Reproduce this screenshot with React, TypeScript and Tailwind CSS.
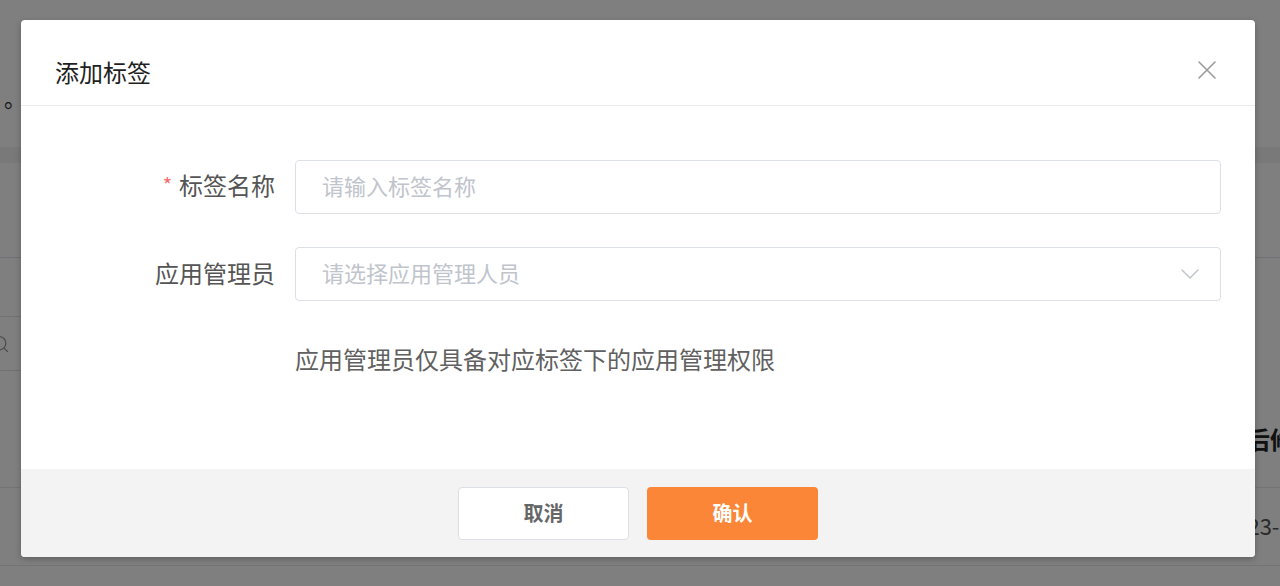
import { Search } from 'lucide-react';

const font = { fontFamily: '"Noto Sans CJK SC", "Noto Sans", sans-serif' };

function BackgroundPage() {
  return (
    <div className="w-full h-[586px] bg-white overflow-hidden">
      <div className="h-[147px] pt-[80px] pl-[4px] text-[22px] leading-[34px] text-[#333]">。</div>
      <div className="h-[16px] bg-[#f2f2f2]" />
      <div className="h-[95px] border-b border-[#dfe5ec]" />
      <div className="h-[58px]" />
      <div className="h-[55px] w-[260px] -ml-[30px] border border-[#e4e4e4] rounded flex items-center pl-[19px]">
        <Search size={20} strokeWidth={1.5} className="text-[#999]" />
      </div>
      <div className="h-[117px] border-b border-[#e8e8e8] flex items-end pb-[31px]">
        <span className="pl-[1222px] whitespace-nowrap text-[24px] leading-[34px] font-bold text-[#222]">最后修改时间</span>
      </div>
      <div className="h-[78px] border-b border-[#e8e8e8] flex items-center pb-[4px]">
        <span className="pl-[1223px] whitespace-nowrap text-[22px] leading-[34px] text-[#555]">2023-05-12 10:24</span>
      </div>
    </div>
  );
}

export default function App() {
  return (
    <div className="relative w-full h-[586px] overflow-hidden" style={font}>
      <BackgroundPage />

      {/* mask */}
      <div className="absolute inset-0 bg-black/50" />

      {/* dialog */}
      <div className="absolute left-[21px] top-[20px] w-[1234px] bg-white rounded-[4px] overflow-hidden shadow-[0_2px_6px_rgba(0,0,0,0.25)]">
        <div className="h-[86px] border-b border-[#ebebeb] pl-[34px] pr-[38px] pt-[35px] flex items-start justify-between">
          <h3 className="text-[24px] leading-[34px] text-[#1f1f1f]">添加标签</h3>
          <button className="mt-[5px] text-[#9a9a9a]">
            <svg width="20" height="20" viewBox="0 0 20 20" fill="none" stroke="currentColor" strokeWidth="1.6" strokeLinecap="round">
              <path d="M2 2 L18 18 M18 2 L2 18" />
            </svg>
          </button>
        </div>

        <div className="h-[363px] pt-[54px] pr-[34px]">
          <div className="flex items-center gap-[20px]">
            <label className="w-[254px] shrink-0 text-right text-[24px] leading-[34px] text-[#555] relative -top-[1px]">
              <span className="text-[#f56c6c] text-[20px] mr-[7px] relative -top-[2px]">*</span>标签名称
            </label>
            <div className="flex-1 h-[54px] border border-[#dcdfe6] rounded-[4px] flex items-center px-[26px]">
              <span className="text-[22px] text-[#c0c4cc] relative -top-[2px]">请输入标签名称</span>
            </div>
          </div>

          <div className="flex items-center gap-[20px] mt-[33px]">
            <label className="w-[254px] shrink-0 text-right text-[24px] leading-[34px] text-[#555] relative -top-[1px]">应用管理员</label>
            <div className="flex-1 h-[54px] border border-[#dcdfe6] rounded-[4px] flex items-center justify-between pl-[26px] pr-[21px]">
              <span className="text-[22px] text-[#c0c4cc] relative -top-[2px]">请选择应用管理人员</span>
              <svg width="18" height="10" viewBox="0 0 18 10" fill="none" stroke="#c0c4cc" strokeWidth="1.5" strokeLinecap="round" strokeLinejoin="round">
                <path d="M1 1 L9 9 L17 1" />
              </svg>
            </div>
          </div>

          <p className="ml-[274px] mt-[41px] text-[24px] leading-[34px] text-[#606060]">
            应用管理员仅具备对应标签下的应用管理权限
          </p>
        </div>

        <div className="h-[88px] bg-[#f3f3f3] flex items-center justify-center gap-[18px]">
          <button className="w-[171px] h-[53px] bg-white border border-[#dcdfe6] rounded-[4px] text-[20px] font-bold text-[#666]">
            取消
          </button>
          <button className="w-[171px] h-[53px] bg-[#fb8638] rounded-[4px] text-[20px] font-bold text-white">
            确认
          </button>
        </div>
      </div>
    </div>
  );
}
